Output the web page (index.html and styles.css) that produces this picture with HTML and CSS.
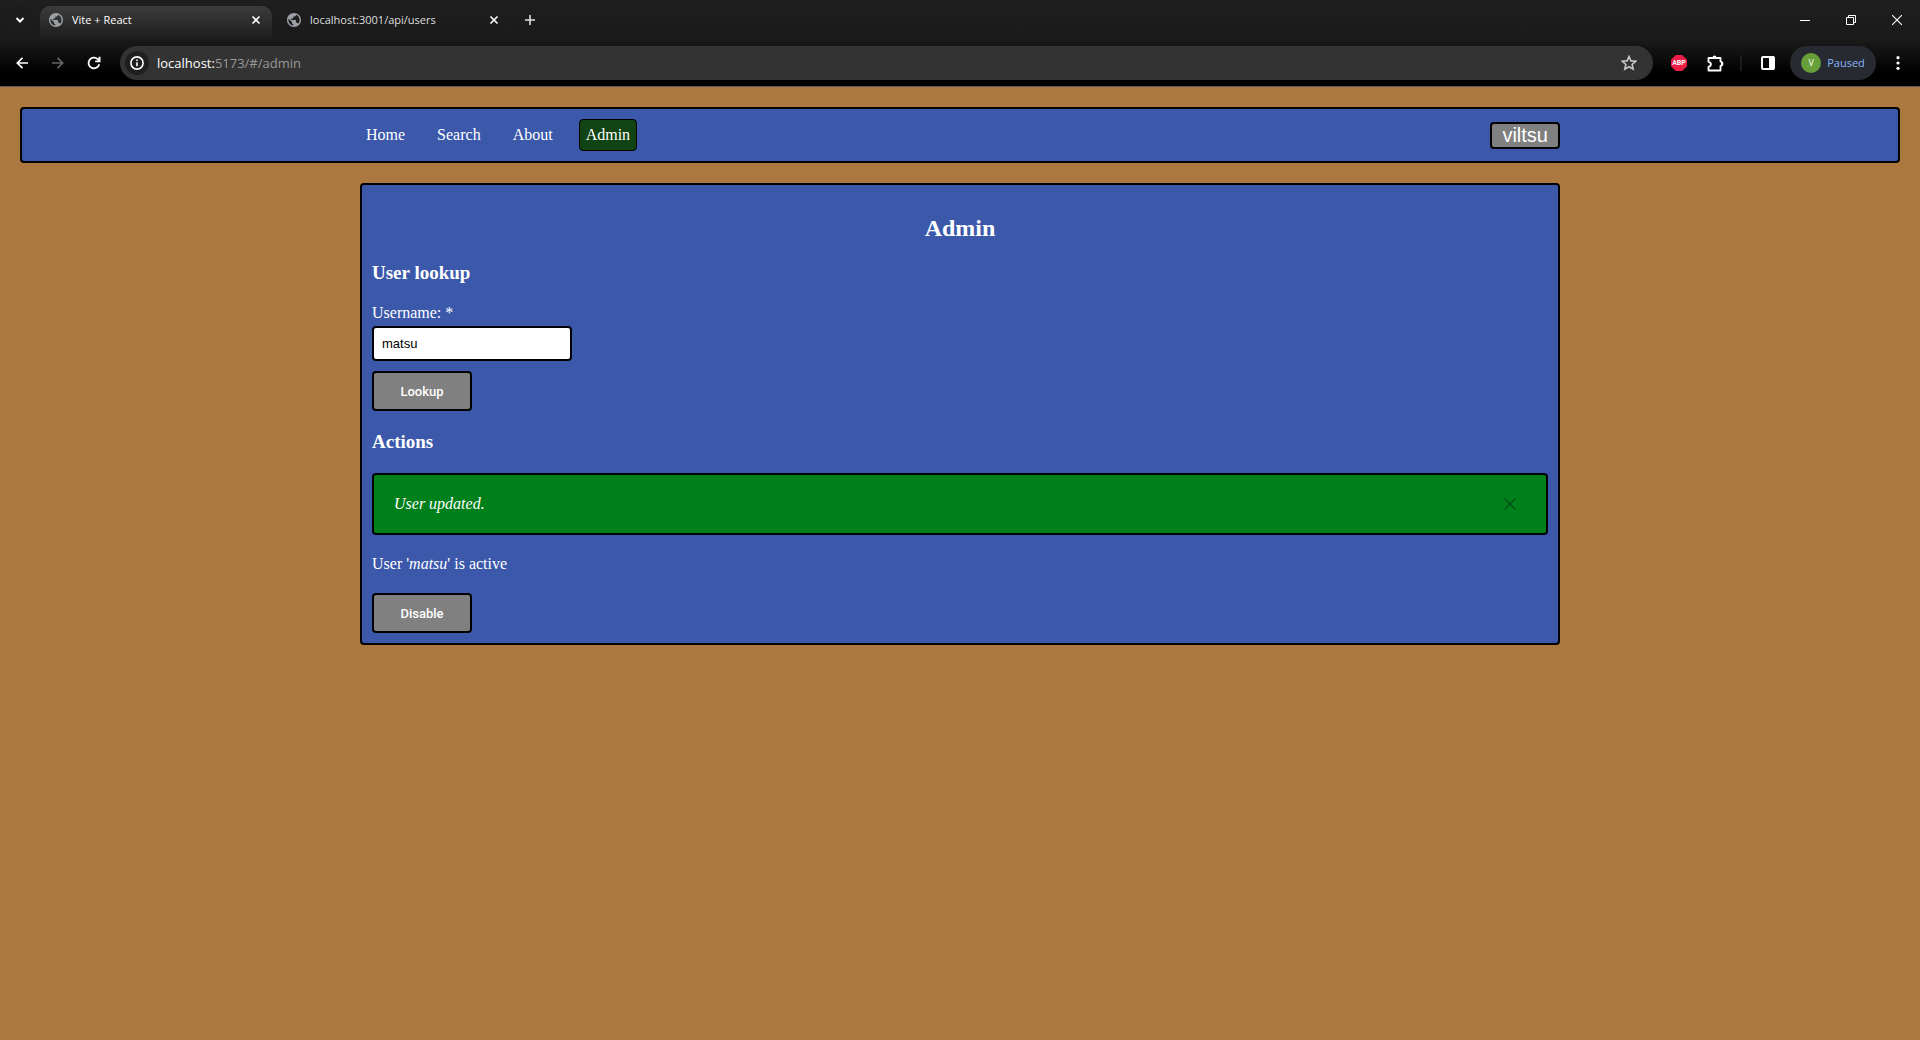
FILE: index.html
```html
<!DOCTYPE html>
<html lang="en">
<head>
<meta charset="utf-8">
<title>Vite + React</title>
<link rel="stylesheet" href="styles.css">
</head>
<body>
<svg class="sprite" aria-hidden="true">
  <symbol id="globe" viewBox="2 2 20 20">
    <path fill="#9aa0a6" d="M12 2C6.480 2 2 6.480 2 12s4.480 10 10 10 10-4.480 10-10S17.520 2 12 2zm-1 17.930c-3.950-.490-7-3.850-7-7.930 0-.620.080-1.210.210-1.790L9 15v1c0 1.100.900 2 2 2v1.930zm6.900-2.540c-.260-.810-1-1.390-1.900-1.390h-1v-3c0-.550-.450-1-1-1H8v-2h2c.550 0 1-.450 1-1V7h2c1.100 0 2-.900 2-2v-.410c2.930 1.190 5 4.060 5 7.410 0 2.080-.800 3.970-2.100 5.390z"/>
  </symbol>
  <symbol id="cross" viewBox="0 0 10 10">
    <path d="M1.500 1.500l7 7M8.500 1.500l-7 7" fill="none" stroke="currentColor" stroke-width="1.600"/>
  </symbol>
</svg>

<header class="browser">
  <div class="tabs">
    <button class="tab-search" aria-label="Search tabs">
      <svg width="10" height="8" viewBox="0 0 10 8"><path d="M1.500 2L5 5.500 8.500 2" fill="none" stroke="currentColor" stroke-width="2"/></svg>
    </button>
    <div class="tab tab-active">
      <svg class="favicon"><use href="#globe"/></svg>
      <span class="tab-title">Vite + React</span>
      <button class="tab-close" aria-label="Close tab"><svg width="10" height="10"><use href="#cross"/></svg></button>
    </div>
    <div class="tab">
      <svg class="favicon"><use href="#globe"/></svg>
      <span class="tab-title">localhost:3001/api/users</span>
      <button class="tab-close" aria-label="Close tab"><svg width="10" height="10"><use href="#cross"/></svg></button>
    </div>
    <button class="tab-new" aria-label="New tab">
      <svg width="10" height="10" viewBox="0 0 10 10"><path d="M5 0v10M0 5h10" stroke="currentColor" stroke-width="1.600"/></svg>
    </button>
    <div class="window-controls">
      <button aria-label="Minimize"><svg width="10" height="10" viewBox="0 0 10 10"><path d="M0 5.500h10" stroke="#fff"/></svg></button>
      <button aria-label="Restore"><svg width="10" height="10" viewBox="0 0 10 10"><path d="M.5 2.500h7v7h-7zM2.500 2.500v-2h7v7h-2" fill="none" stroke="#fff"/></svg></button>
      <button aria-label="Close"><svg width="10" height="10" viewBox="0 0 10 10"><path d="M0 0l10 10M10 0L0 10" stroke="#fff" stroke-width="1.100"/></svg></button>
    </div>
  </div>
  <div class="toolbar">
    <button class="tool" aria-label="Back"><svg width="12" height="12" viewBox="0 0 12 12"><path d="M12 6H1.500M6.500 .8L1.300 6l5.200 5.200" fill="none" stroke="#fff" stroke-width="1.700"/></svg></button>
    <button class="tool" aria-label="Forward"><svg width="12" height="12" viewBox="0 0 12 12"><path d="M0 6h10.500M5.500 .8L10.700 6l-5.200 5.200" fill="none" stroke="#666" stroke-width="1.700"/></svg></button>
    <button class="tool" aria-label="Reload"><svg width="14" height="14" viewBox="0 0 14 14"><path d="M12.200 8.200A5.400 5.400 0 1 1 10.800 3.200L12.500 4.900M12.600 .8v4.500H8.200" fill="none" stroke="#fff" stroke-width="1.800"/></svg></button>
    <div class="omnibox">
      <button class="site-info" aria-label="Site information"><svg width="14" height="14" viewBox="0 0 14 14"><circle cx="7" cy="7" r="6.100" fill="none" stroke="#fff" stroke-width="1.600"/><path d="M7 6.200v4M7 3.500v1.500" stroke="#fff" stroke-width="1.600"/></svg></button>
      <span class="url"><span class="host">localhost:</span>5173/#/admin</span>
      <button class="star" aria-label="Bookmark this tab"><svg width="16" height="16" viewBox="0 0 16 16"><path d="M8 1.500l1.900 4.400 4.800.4-3.600 3.200 1.100 4.700L8 11.700l-4.200 2.500 1.100-4.700L1.300 6.300l4.800-.4z" fill="none" stroke="#c7c7c7" stroke-width="1.600"/></svg></button>
    </div>
    <button class="abp" aria-label="Adblock Plus">ABP</button>
    <button class="puzzle" aria-label="Extensions"><svg width="17" height="17" viewBox="0 0 17 17"><path d="M1.500 3h12v3.600c2.600.400 2.600 3.800 0 4.200v4.700h-12v-3.700c3.200-.600 3.200-4.400 0-5z" fill="none" stroke="#fff" stroke-width="1.800" stroke-linejoin="round"/><path d="M5.500 2.500a2 2 0 0 1 4 0zM14 6.700a2 2 0 0 1 0 4z" fill="#fff"/></svg></button>
    <span class="divider"></span>
    <button class="side" aria-label="Side panel"><svg width="14" height="16" viewBox="0 0 14 16"><rect x="1" y="2" width="12" height="12" rx="1" fill="none" stroke="#fff" stroke-width="2"/><path d="M8 1h5v14H8z" fill="#fff"/></svg></button>
    <button class="profile"><span class="avatar">V</span>Paused</button>
    <button class="menu" aria-label="Menu"><svg width="4" height="14" viewBox="0 0 4 14"><g fill="#fff"><circle cx="2" cy="1.700" r="1.600"/><circle cx="2" cy="7" r="1.600"/><circle cx="2" cy="12.300" r="1.600"/></g></svg></button>
  </div>
</header>

<div class="page">
  <nav class="navbar">
    <div class="nav-inner">
      <a class="nav-link" href="#/">Home</a>
      <a class="nav-link" href="#/search">Search</a>
      <a class="nav-link" href="#/about">About</a>
      <a class="nav-link current" href="#/admin">Admin</a>
      <button class="user-button">viltsu</button>
    </div>
  </nav>
  <main class="panel">
    <h2>Admin</h2>
    <h3>User lookup</h3>
    <form class="lookup">
      <label for="username">Username: *</label>
      <input id="username" type="text" value="matsu" required>
      <button class="action" type="button">Lookup</button>
    </form>
    <h3>Actions</h3>
    <div class="alert" role="status">
      <em>User updated.</em>
      <button class="dismiss" aria-label="Dismiss"><svg width="12" height="12" viewBox="0 0 12 12"><path d="M.5 .5l11 11M11.500 .5l-11 11" stroke="currentColor" stroke-width="1.200"/></svg></button>
    </div>
    <p>User '<em>matsu</em>' is active</p>
    <button class="action" type="button">Disable</button>
  </main>
</div>
</body>
</html>
```

FILE: styles.css
```css
* { box-sizing: border-box; }

body {
  margin: 0;
  min-height: 100vh;
  background: #ab783f;
  color: #fff;
  font: 16px/18px "Liberation Serif", serif;
}

h2, h3, p { margin: 0; }
svg { display: block; flex: none; }
.sprite { position: absolute; width: 0; height: 0; }

/* Browser frame */
.browser {
  height: 87px;
  border-bottom: 1px solid #5c5c5c;
  background: linear-gradient(#1f1f1f, #1a1a1a 40px, #000 74px);
  font: 11px/16px "Open Sans", sans-serif;
}

.browser button {
  display: flex;
  align-items: center;
  justify-content: center;
  padding: 0;
  border: 0;
  background: none;
  color: #fff;
  font: inherit;
}

.tabs {
  display: flex;
  align-items: center;
  height: 40px;
}

.browser .tab-search {
  width: 28px;
  height: 28px;
  margin: 0 6px;
  border-radius: 10px;
  background: #1c1c1c;
}

.tab {
  display: flex;
  align-items: center;
  width: 232px;
  height: 28px;
  padding: 0 11px 0 9px;
  margin-left: 6px;
  border-radius: 10px;
  color: #dfdfdf;
}

.tab-active {
  height: 34px;
  margin: 6px 0 0;
  padding-bottom: 6px;
  border-radius: 10px 10px 0 0;
  background: linear-gradient(#3c3c3c, #1c1c1c);
  color: #fff;
}

.favicon { width: 14px; height: 14px; margin-right: 9px; }
.tab-title { flex: 1; }
.browser .tab-new { width: 28px; height: 28px; margin-left: 6px; color: #dfdfdf; }

.window-controls {
  display: flex;
  margin-left: auto;
}

.window-controls button { width: 46px; height: 28px; }

.toolbar {
  display: flex;
  align-items: center;
  height: 46px;
  padding-left: 4px;
}

.tool { width: 36px; height: 34px; }

.omnibox {
  display: flex;
  flex: 1;
  align-items: center;
  height: 34px;
  margin-left: 8px;
  padding: 0 16px 0 5px;
  border-radius: 17px;
  background: #333;
  color: #9a9a9a;
  font-size: 13px;
}

.browser .site-info {
  width: 24px;
  height: 24px;
  margin-right: 8px;
  border-radius: 50%;
  background: #1f1f1f;
}

.url { flex: 1; }
.host { color: #fff; }

.browser .abp {
  width: 16px;
  height: 16px;
  margin-left: 18px;
  background: #ed1e45;
  clip-path: polygon(30% 0, 70% 0, 100% 30%, 100% 70%, 70% 100%, 30% 100%, 0 70%, 0 30%);
  font: bold 7px/16px Roboto, sans-serif;
}

.browser .puzzle { margin-left: 20px; }
.divider { width: 2px; height: 16px; margin: 0 19px 0 16px; background: #1c1c1c; }

.browser .profile {
  gap: 6px;
  width: 86px;
  height: 34px;
  margin: 0 20px 0 15px;
  border-radius: 17px;
  background: #272a30;
  color: #8ab4f8;
}

.avatar {
  width: 20px;
  height: 20px;
  border-radius: 50%;
  background: #689f38;
  color: #fff;
  font-size: 9px;
  line-height: 20px;
}

.browser .menu { margin-right: 20px; }

/* Application */
.page { padding: 20px; }

.navbar, .panel {
  border: 2px solid #000;
  border-radius: 4px;
  background: #3b58aa;
}

.navbar { padding: 10px; }

.nav-inner {
  display: flex;
  align-items: center;
  gap: 20px;
  max-width: 1200px;
  margin: 0 auto;
}

.nav-link {
  padding: 6px 5px;
  border: 1px solid transparent;
  border-radius: 4px;
  color: #fff;
  text-decoration: none;
}

.nav-link.current { padding: 6px; border-color: #000; background: #114414; }

.user-button {
  margin-left: auto;
  padding: 0 10px;
  border: 2px solid #000;
  border-radius: 4px;
  background: #808080;
  color: #fff;
  font: 20px/23px "Liberation Sans", sans-serif;
}

.panel {
  max-width: 1200px;
  margin: 20px auto 0;
  padding: 30px 10px 10px;
}

h2 { margin-bottom: 20px; font-size: 24px; line-height: 27px; text-align: center; }
h3 { margin-bottom: 20px; font-size: 19px; line-height: 22px; }

.lookup {
  display: flex;
  flex-direction: column;
  align-items: flex-start;
  margin-bottom: 20px;
}

.lookup input {
  width: 200px;
  height: 35px;
  margin: 4px 0 10px;
  padding: 0 8px;
  border: 2px solid #000;
  border-radius: 4px;
  background: #fff;
  color: #000;
  font: 13px/15px "Liberation Sans", sans-serif;
}

.action {
  display: block;
  width: 100px;
  height: 40px;
  padding: 0;
  border: 2px solid #000;
  border-radius: 4px;
  background: #808080;
  color: #fff;
  font: 500 13px/15px Roboto, sans-serif;
}

.alert {
  display: flex;
  align-items: center;
  justify-content: space-between;
  margin-bottom: 20px;
  padding: 20px 30px 20px 20px;
  border: 2px solid #000;
  border-radius: 4px;
  background: #00801a;
}

.dismiss {
  padding: 0;
  border: 0;
  background: none;
  color: #004d10;
}

.panel p { margin-bottom: 20px; }
```
